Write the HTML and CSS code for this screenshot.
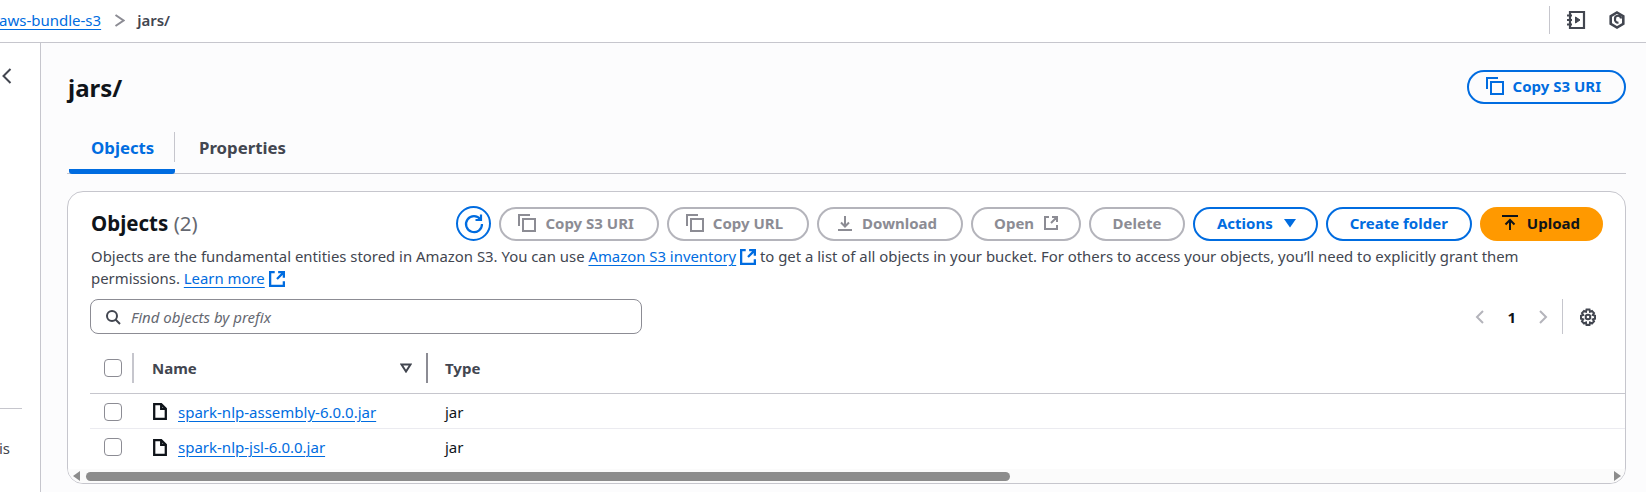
FILE: index.html
```html
<!DOCTYPE html>
<html lang="en">
<head>
  <meta charset="UTF-8">
  <meta name="viewport" content="width=device-width, initial-scale=1.0">
  <title>jars/ - S3 bucket</title>
  <link rel="stylesheet" href="styles.css">
</head>
<body>
  <header class="topbar">
    <nav class="crumbs">
      <a class="crumb-link" href="#">aws-bundle-s3</a>
      <svg class="crumb-sep" width="11" height="13" viewBox="0 0 11 13"><path d="M1.500 1l8 5.500-8 5.500" fill="none" stroke="#8c8c94" stroke-width="2"/></svg>
      <span class="crumb-current">jars/</span>
    </nav>
    <div class="top-tools">
      <svg width="20" height="20" viewBox="0 0 20 20" fill="none" stroke="#424650" stroke-width="2.200"><path d="M4 2h14v16H4z"/><path d="M1 5.500h5M1 10h5M1 14.500h5"/><path d="M9.500 7l4.500 3-4.500 3z" fill="#424650" stroke-width="1"/></svg>
      <svg width="18" height="18" viewBox="0 0 18 18" fill="none" stroke="#424650" stroke-width="2.600"><path d="M9 1.500l6.300 3.700v7.600L9 16.500l-6.300-3.700V5.200z"/><path d="M13 7.500A3 3 0 0 0 7 8a3 3 0 0 0 3.500 3.500" stroke-width="2.200"/></svg>
    </div>
  </header>

  <div class="layout">
    <aside class="sidenav">
      <svg class="nav-toggle" width="12" height="16" viewBox="0 0 12 16"><path d="M9.500 1L2.500 8l7 7" fill="none" stroke="#424650" stroke-width="2"/></svg>
      <div class="nav-line"></div>
      <div class="nav-clip">is</div>
    </aside>

    <main class="content">
      <div class="page-head">
        <h1>jars/</h1>
        <button class="btn btn-primary btn-head">
          <svg class="icon icon-copy" viewBox="0 0 18 18"><path d="M1 12V1h11M5 5h12v12H5z"/></svg>
          Copy S3 URI
        </button>
      </div>

      <div class="tabs">
        <div class="tab tab-active">Objects</div>
        <div class="tab">Properties</div>
      </div>

      <section class="card">
        <div class="card-head">
          <h2>Objects <span class="count">(2)</span></h2>
          <div class="actions">
            <button class="btn-round">
              <svg width="22" height="22" viewBox="0 0 22 22" fill="none" stroke="#006ce0" stroke-width="2.200"><path d="M17.500 6.500A8 8 0 1 0 19 11"/><path d="M18 1.500v5.500h-5.500"/></svg>
            </button>
            <button class="btn btn-off btn-uri">
              <svg class="icon icon-copy" viewBox="0 0 18 18"><path d="M1 12V1h11M5 5h12v12H5z"/></svg>
              Copy S3 URI
            </button>
            <button class="btn btn-off btn-url">
              <svg class="icon icon-copy" viewBox="0 0 18 18"><path d="M1 12V1h11M5 5h12v12H5z"/></svg>
              Copy URL
            </button>
            <button class="btn btn-off btn-download">
              <svg class="icon icon-lead" viewBox="0 0 16 16"><path d="M1 15h14M8 1v10M4 7.500L8 11.500l4-4"/></svg>
              Download
            </button>
            <button class="btn btn-off btn-open">
              Open
              <svg class="icon" viewBox="0 0 16 16"><path d="M6 2H2v12h12v-4M9 2h5v5M14 2L8 8"/></svg>
            </button>
            <button class="btn btn-off btn-delete">Delete</button>
            <button class="btn btn-primary btn-actions">
              Actions
              <svg class="icon icon-solid" viewBox="0 0 16 16"><path d="M2 4h12L8 12.500z"/></svg>
            </button>
            <button class="btn btn-primary btn-folder">Create folder</button>
            <button class="btn btn-upload">
              <svg class="icon icon-lead" viewBox="0 0 16 16"><path d="M0 1h16M8 15V5M3.500 9.500L8 5l4.500 4.500"/></svg>
              Upload
            </button>
          </div>
        </div>

        <p class="desc">Objects are the fundamental entities stored in Amazon S3. You can use <a href="#">Amazon S3 inventory</a> <svg class="ext" viewBox="1 1 14 14"><path d="M6 2H2v12h12v-4M9 2h5v5M14 2L8 8"/></svg> to get a list of all objects in your bucket. For others to access your objects, you’ll need to explicitly grant them permissions. <a href="#">Learn more</a> <svg class="ext" viewBox="1 1 14 14"><path d="M6 2H2v12h12v-4M9 2h5v5M14 2L8 8"/></svg></p>

        <div class="filter-row">
          <div class="search">
            <svg width="16" height="16" viewBox="0 0 16 16" fill="none" stroke="#424650" stroke-width="2"><circle cx="7" cy="7" r="5"/><path d="M10.500 10.500L15 15"/></svg>
            <span>Find objects by prefix</span>
          </div>
          <div class="pager">
            <svg width="10" height="14" viewBox="0 0 10 14"><path d="M8 1L2 7l6 6" fill="none" stroke="#b4b4bb" stroke-width="2"/></svg>
            <span class="page-num">1</span>
            <svg width="10" height="14" viewBox="0 0 10 14"><path d="M2 1l6 6-6 6" fill="none" stroke="#b4b4bb" stroke-width="2"/></svg>
            <div class="pager-line"></div>
            <svg width="18" height="18" viewBox="0 0 18 18" fill="none" stroke="#424650" stroke-width="2"><path d="M7.500 1.500h3l.5 2.300 2-.900 2 2.200-1.200 1.800 2.200.800v3l-2.200.700 1.200 1.900-2 2.200-2-1-.500 2.400h-3l-.500-2.400-2 1-2-2.200 1.200-1.900-2.200-.700v-3l2.200-.800L3 5.100l2-2.200 2 .900z"/><circle cx="9" cy="9" r="2.300"/></svg>
          </div>
        </div>

        <div class="table">
          <div class="row row-head">
            <div class="cell-check"><span class="check"></span><span class="col-line"></span></div>
            <div class="cell-name">
              <span>Name</span>
              <svg class="sort" width="12" height="10" viewBox="0 0 12 10"><path d="M1.500 1.500h9L6 8.500z" fill="none" stroke="#424650" stroke-width="2"/></svg>
              <span class="col-line col-line-dark"></span>
            </div>
            <div class="cell-type">Type</div>
          </div>
          <div class="row">
            <div class="cell-check"><span class="check"></span></div>
            <div class="cell-name cell-file">
              <svg width="14" height="17" viewBox="0 0 14 17" fill="none" stroke="#0f141a" stroke-width="2.300"><path d="M1.200 1.200h7l4.600 4.600v10H1.200z"/><path d="M8.200 1.200v4.600h4.600"/></svg>
              <a href="#">spark-nlp-assembly-6.0.0.jar</a>
            </div>
            <div class="cell-type">jar</div>
          </div>
          <div class="row">
            <div class="cell-check"><span class="check"></span></div>
            <div class="cell-name cell-file">
              <svg width="14" height="17" viewBox="0 0 14 17" fill="none" stroke="#0f141a" stroke-width="2.300"><path d="M1.200 1.200h7l4.600 4.600v10H1.200z"/><path d="M8.200 1.200v4.600h4.600"/></svg>
              <a href="#">spark-nlp-jsl-6.0.0.jar</a>
            </div>
            <div class="cell-type">jar</div>
          </div>
        </div>

        <div class="scrollbar">
          <span class="arrow-left"></span>
          <div class="scroll-track"><div class="scroll-thumb"></div></div>
          <span class="arrow-right"></span>
        </div>
      </section>
    </main>
  </div>
</body>
</html>
```
FILE: styles.css
```css
* {
  box-sizing: border-box;
}
html, body {
  height: 100%;
}
body {
  margin: 0;
  overflow: hidden;
  background: #fff;
  color: #0f141a;
  font-family: "Noto Sans", sans-serif;
  font-size: 15px;
  line-height: 22px;
}
a {
  color: #006ce0;
  text-decoration: underline;
  text-underline-offset: 3px;
}

/* top bar */
.topbar {
  height: 43px;
  border-bottom: 1px solid #c6c6cd;
  display: flex;
  justify-content: space-between;
  align-items: center;
  padding-bottom: 2px;
}
.crumbs {
  display: flex;
  align-items: center;
  margin-left: -1px;
}
.crumb-sep {
  margin: 0 12px 0 13px;
}
.crumb-current {
  color: #424650;
  font-weight: 600;
}
.top-tools {
  height: 28px;
  border-left: 1px solid #c6c6cd;
  display: flex;
  align-items: center;
  gap: 22px;
  padding: 0 20px 0 16px;
}

/* page */
.layout {
  display: flex;
  height: 449px;
}
.sidenav {
  width: 41px;
  border-right: 1px solid #c6c6cd;
  background: #fff;
  padding-top: 25px;
  overflow: hidden;
}
.nav-toggle {
  display: block;
  margin-left: 1px;
}
.nav-line {
  width: 22px;
  height: 1px;
  background: #c6c6cd;
  margin-top: 324px;
}
.nav-clip {
  margin-top: 28px;
  margin-left: -1px;
  color: #424650;
}
.content {
  flex: 1;
  min-width: 0;
  background: #fcfcfd;
  padding: 0 20px 0 26px;
}
.page-head {
  display: flex;
  justify-content: space-between;
  padding-top: 27px;
  height: 87px;
}
h1 {
  margin: 0;
  font-size: 24px;
  line-height: 36px;
  font-weight: 700;
  padding-left: 1px;
}
.tabs {
  display: flex;
  height: 44px;
  border-bottom: 1px solid #c6c6cd;
}
.tab {
  height: 44px;
  padding: 7px 24px 0 24px;
  font-size: 16.800px;
  font-weight: 700;
  color: #424650;
  position: relative;
}
.tab-active {
  color: #006ce0;
  width: 106px;
  margin-left: 2px;
  padding-left: 22px;
  border-bottom: 5px solid #006ce0;
  border-radius: 3px;
}
.tab-active::after {
  content: "";
  position: absolute;
  right: 0;
  top: 2px;
  height: 30px;
  width: 1px;
  background: #c6c6cd;
}

/* buttons */
.btn {
  height: 34px;
  border-radius: 17px;
  border: 2px solid;
  background: #fff;
  font-family: inherit;
  font-size: 15px;
  font-weight: 700;
  padding: 0 21px 2px;
  display: inline-flex;
  align-items: center;
  gap: 9px;
  white-space: nowrap;
}
.icon {
  width: 16px;
  height: 16px;
  fill: none;
  stroke: currentColor;
  stroke-width: 2;
}
.icon-copy {
  width: 18px;
  height: 18px;
  margin-left: -4px;
}
.icon-lead {
  margin-left: -3px;
}
.icon-solid {
  fill: currentColor;
  stroke: none;
}
.btn-primary {
  color: #006ce0;
  border-color: #006ce0;
}
.btn-off {
  color: #8c8c94;
  border-color: #b4b4bb;
}
.btn-uri {
  padding-right: 23px;
}
.btn-url {
  padding-right: 24px;
}
.btn-download {
  padding-right: 24px;
}
.btn-open {
  padding-right: 20px;
}
.btn-delete {
  padding: 0 21.500px 2px;
}
.btn-actions {
  padding: 0 18px 2px 22px;
}
.btn-folder {
  padding: 0 22px 2px;
}
.btn-upload {
  color: #0f141a;
  background: #ff9900;
  border-color: #ff9900;
  padding-left: 23px;
}
.btn-round {
  width: 35px;
  height: 35px;
  padding: 0;
  border: 2px solid #006ce0;
  border-radius: 50%;
  background: #fff;
  display: flex;
  align-items: center;
  justify-content: center;
}
.btn-head {
  background: transparent;
  padding-right: 23px;
}

/* objects card */
.card {
  margin-top: 17px;
  height: 293px;
  background: #fff;
  border: 1px solid #c6c6cd;
  border-radius: 16px;
  overflow: hidden;
}
.card-head {
  display: flex;
  justify-content: space-between;
  align-items: center;
  padding: 14px 22px 0 23px;
}
h2 {
  margin: -2px 0 0;
  font-size: 20.500px;
  line-height: 30px;
  font-weight: 700;
}
.count {
  font-weight: 400;
  color: #656871;
}
.actions {
  display: flex;
  align-items: center;
  gap: 8px;
}
.desc {
  margin: 4px 22px 0 23px;
  color: #424650;
  font-size: 14.900px;
}
.ext {
  width: 16px;
  height: 16px;
  fill: none;
  stroke: #006ce0;
  stroke-width: 2;
  vertical-align: -3px;
}
.filter-row {
  display: flex;
  justify-content: space-between;
  align-items: center;
  padding: 0 28px 0 22px;
  margin-top: 10px;
}
.search {
  width: 552px;
  height: 35px;
  border: 1px solid #8c8c94;
  border-radius: 8px;
  display: flex;
  align-items: center;
  gap: 10px;
  padding-left: 14px;
  font-style: italic;
  color: #656871;
}
.pager {
  display: flex;
  align-items: center;
  height: 35px;
}
.page-num {
  font-weight: 700;
  margin: 0 22px;
}
.pager-line {
  width: 1px;
  height: 35px;
  background: #c6c6cd;
  margin: 0 16px 0 14px;
}

/* table */
.table {
  margin-top: 15px;
}
.row {
  display: grid;
  grid-template-columns: 62px 293px 1fr;
  margin-left: 22px;
  height: 35px;
  padding-top: 1px;
  border-bottom: 1px solid #ebebf0;
  align-items: center;
}
.row-head {
  height: 45px;
  padding-top: 0;
  border-bottom-color: #c6c6cd;
  font-weight: 700;
  color: #424650;
  padding-bottom: 6px;
}
.cell-check {
  display: flex;
  align-items: center;
  padding-left: 14px;
}
.check {
  width: 18px;
  height: 18px;
  border: 1px solid #8c8c94;
  border-radius: 4px;
  background: #fff;
}
.col-line {
  width: 2px;
  height: 30px;
  background: #c6c6cd;
  margin-left: 10px;
}
.col-line-dark {
  background: #8c8c94;
  margin-left: 14px;
}
.cell-name {
  display: flex;
  align-items: center;
}
.sort {
  margin-left: auto;
}
.cell-name .col-line-dark {
  margin-right: 17px;
}
.cell-file {
  gap: 11px;
  padding-left: 1px;
}
.table .row:last-child {
  border-bottom: 0;
}
.scrollbar {
  display: flex;
  align-items: center;
  gap: 6px;
  height: 14px;
  margin-top: 5px;
  background: #fbfbfb;
  padding: 0 4px 0 5px;
}
.scroll-track {
  flex: 1;
}
.scroll-thumb {
  width: 924px;
  height: 9px;
  border-radius: 5px;
  background: #8c8c8c;
}
.arrow-left {
  width: 0;
  height: 0;
  border: 5px solid transparent;
  border-left-width: 0;
  border-right: 7px solid #8c8c8c;
}
.arrow-right {
  width: 0;
  height: 0;
  border: 5px solid transparent;
  border-right-width: 0;
  border-left: 7px solid #8c8c8c;
}
```
